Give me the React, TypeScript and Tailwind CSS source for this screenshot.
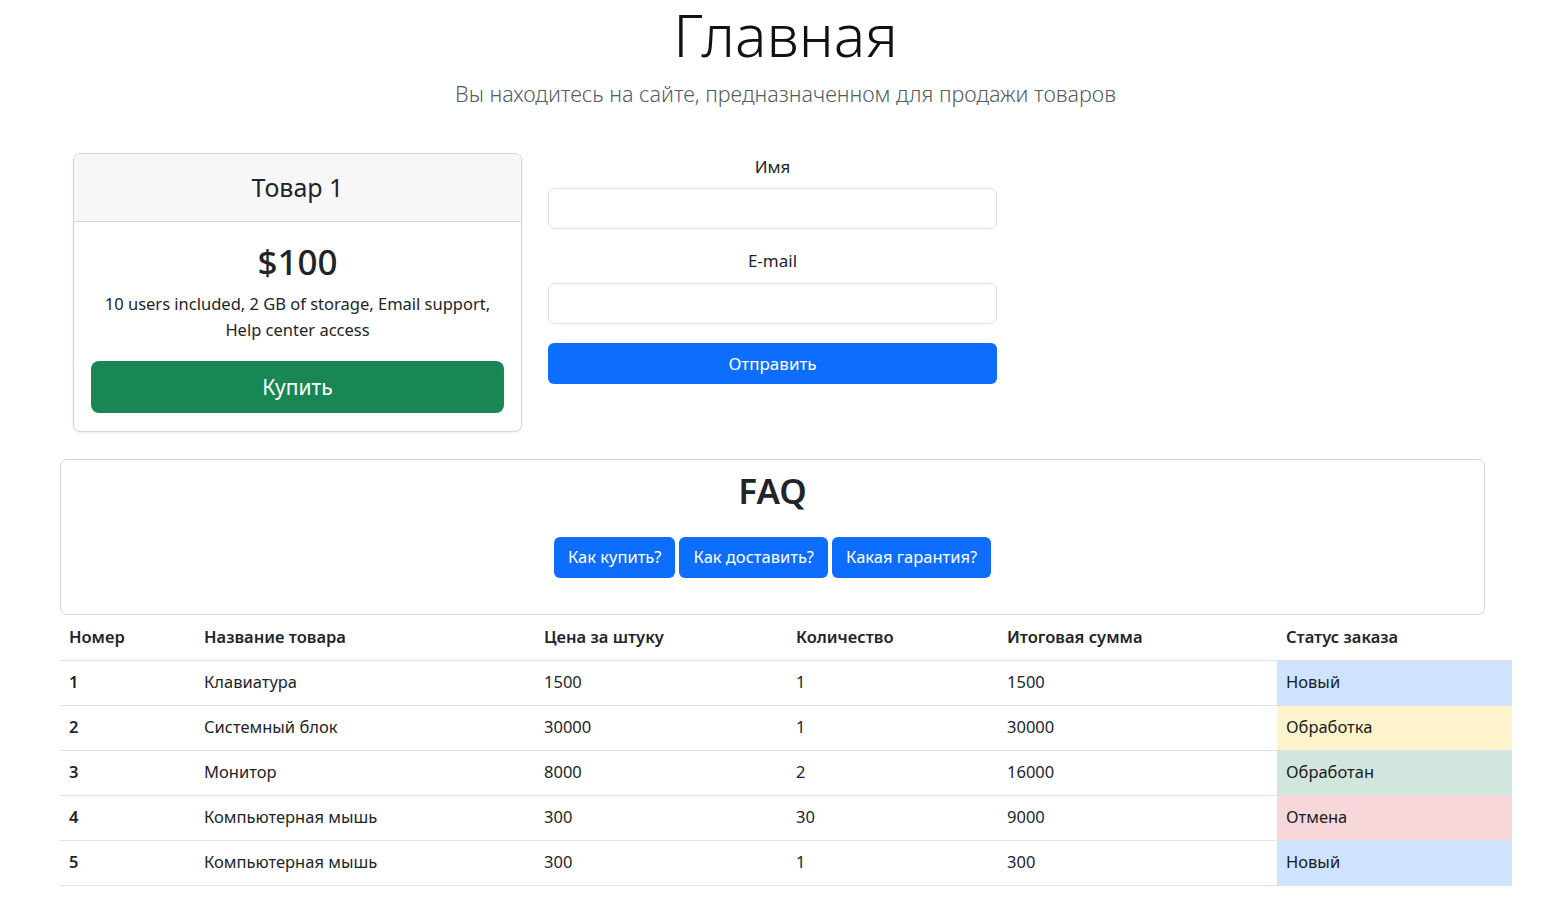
import React from "react";

type Order = {
  id: number;
  name: string;
  price: number;
  qty: number;
  total: number;
  status: string;
  tone: string;
};

const orders: Order[] = [
  { id: 1, name: "Клавиатура", price: 1500, qty: 1, total: 1500, status: "Новый", tone: "bg-[#cfe2ff]" },
  { id: 2, name: "Системный блок", price: 30000, qty: 1, total: 30000, status: "Обработка", tone: "bg-[#fff3cd]" },
  { id: 3, name: "Монитор", price: 8000, qty: 2, total: 16000, status: "Обработан", tone: "bg-[#d1e7dd]" },
  { id: 4, name: "Компьютерная мышь", price: 300, qty: 30, total: 9000, status: "Отмена", tone: "bg-[#f8d7da]" },
  { id: 5, name: "Компьютерная мышь", price: 300, qty: 1, total: 300, status: "Новый", tone: "bg-[#cfe2ff]" },
];

function ProductCard() {
  return (
    <div className="w-[449px] rounded-[7px] border border-[#d3d5d8] bg-white shadow-[0_1px_3px_rgba(0,0,0,0.08)] overflow-hidden">
      <div className="h-[68px] flex items-center justify-center bg-[#f7f7f7] border-b border-[#d3d5d8] text-[25px] text-[#212529]">
        Товар 1
      </div>
      <div className="px-[17px] pt-[19px] pb-[18px] text-center">
        <div className="text-[35px] leading-[42px] font-medium text-[#212529]">$100</div>
        <p className="mt-[8px] text-[16.5px] leading-[26px] text-[#212529]">
          10 users included, 2 GB of storage, Email support,<br />Help center access
        </p>
        <button className="mt-[18px] w-full h-[52px] rounded-[8px] bg-[#198754] text-white text-[21px] leading-[52px]">
          Купить
        </button>
      </div>
    </div>
  );
}

function ContactForm() {
  return (
    <form className="w-[449px] flex flex-col text-center" onSubmit={(e) => e.preventDefault()}>
      <label className="pt-[1px] text-[17px] leading-[26px] text-[#212529]">Имя</label>
      <input className="mt-[8px] h-[41px] rounded-[6px] border border-[#dee2e6] px-3" />
      <label className="mt-[19px] text-[17px] leading-[26px] text-[#212529]">E-mail</label>
      <input className="mt-[9px] h-[41px] rounded-[6px] border border-[#dee2e6] px-3" />
      <button className="mt-[19px] h-[41px] rounded-[6px] bg-[#0d6efd] text-white text-[17px]">
        Отправить
      </button>
    </form>
  );
}

export default function App() {
  const faq = ["Как купить?", "Как доставить?", "Какая гарантия?"];

  return (
    <div className="min-h-screen bg-white font-['Noto_Sans',sans-serif] text-[#212529]">
      <header className="pl-[20px] text-center">
        <h1 className="text-[59px] leading-[68px] font-light text-[#111]">Главная</h1>
        <p className="mt-[11px] text-[21.5px] leading-[30px] font-light text-[#555c63]">
          Вы находитесь на сайте, предназначенном для продажи товаров
        </p>
      </header>

      <div className="mt-[44px] pl-[73px] flex gap-[26px] items-start">
        <ProductCard />
        <ContactForm />
      </div>

      <section className="mt-[27px] ml-[60px] w-[1425px] h-[156px] rounded-[7px] border border-[#d3d5d8] pt-[10px] text-center">
        <h2 className="text-[35px] leading-[42px] font-semibold text-[#212529]">FAQ</h2>
        <div className="mt-[25px] flex justify-center gap-[4px]">
          {faq.map((q) => (
            <button key={q} className="h-[41px] px-[14px] rounded-[6px] bg-[#0d6efd] text-white text-[16.5px]">
              {q}
            </button>
          ))}
        </div>
      </section>

      <table className="ml-[60px] w-[1452px] table-fixed border-collapse text-left text-[16.5px]">
        <colgroup>
          <col className="w-[135px]" />
          <col className="w-[340px]" />
          <col className="w-[252px]" />
          <col className="w-[211px]" />
          <col className="w-[279px]" />
          <col className="w-[235px]" />
        </colgroup>
        <thead>
          <tr className="h-[45px] border-b border-[#dee2e6]">
            <th className="px-[9px] font-semibold">Номер</th>
            <th className="px-[9px] font-semibold">Название товара</th>
            <th className="px-[9px] font-semibold">Цена за штуку</th>
            <th className="px-[9px] font-semibold">Количество</th>
            <th className="px-[9px] font-semibold">Итоговая сумма</th>
            <th className="px-[9px] font-semibold">Статус заказа</th>
          </tr>
        </thead>
        <tbody>
          {orders.map((o) => (
            <tr key={o.id} className="h-[45px] border-b border-[#dee2e6]">
              <td className="px-[9px] font-semibold">{o.id}</td>
              <td className="px-[9px]">{o.name}</td>
              <td className="px-[9px]">{o.price}</td>
              <td className="px-[9px]">{o.qty}</td>
              <td className="px-[9px]">{o.total}</td>
              <td className={"px-[9px] text-[#1a1d20] " + o.tone}>{o.status}</td>
            </tr>
          ))}
        </tbody>
      </table>
    </div>
  );
}
